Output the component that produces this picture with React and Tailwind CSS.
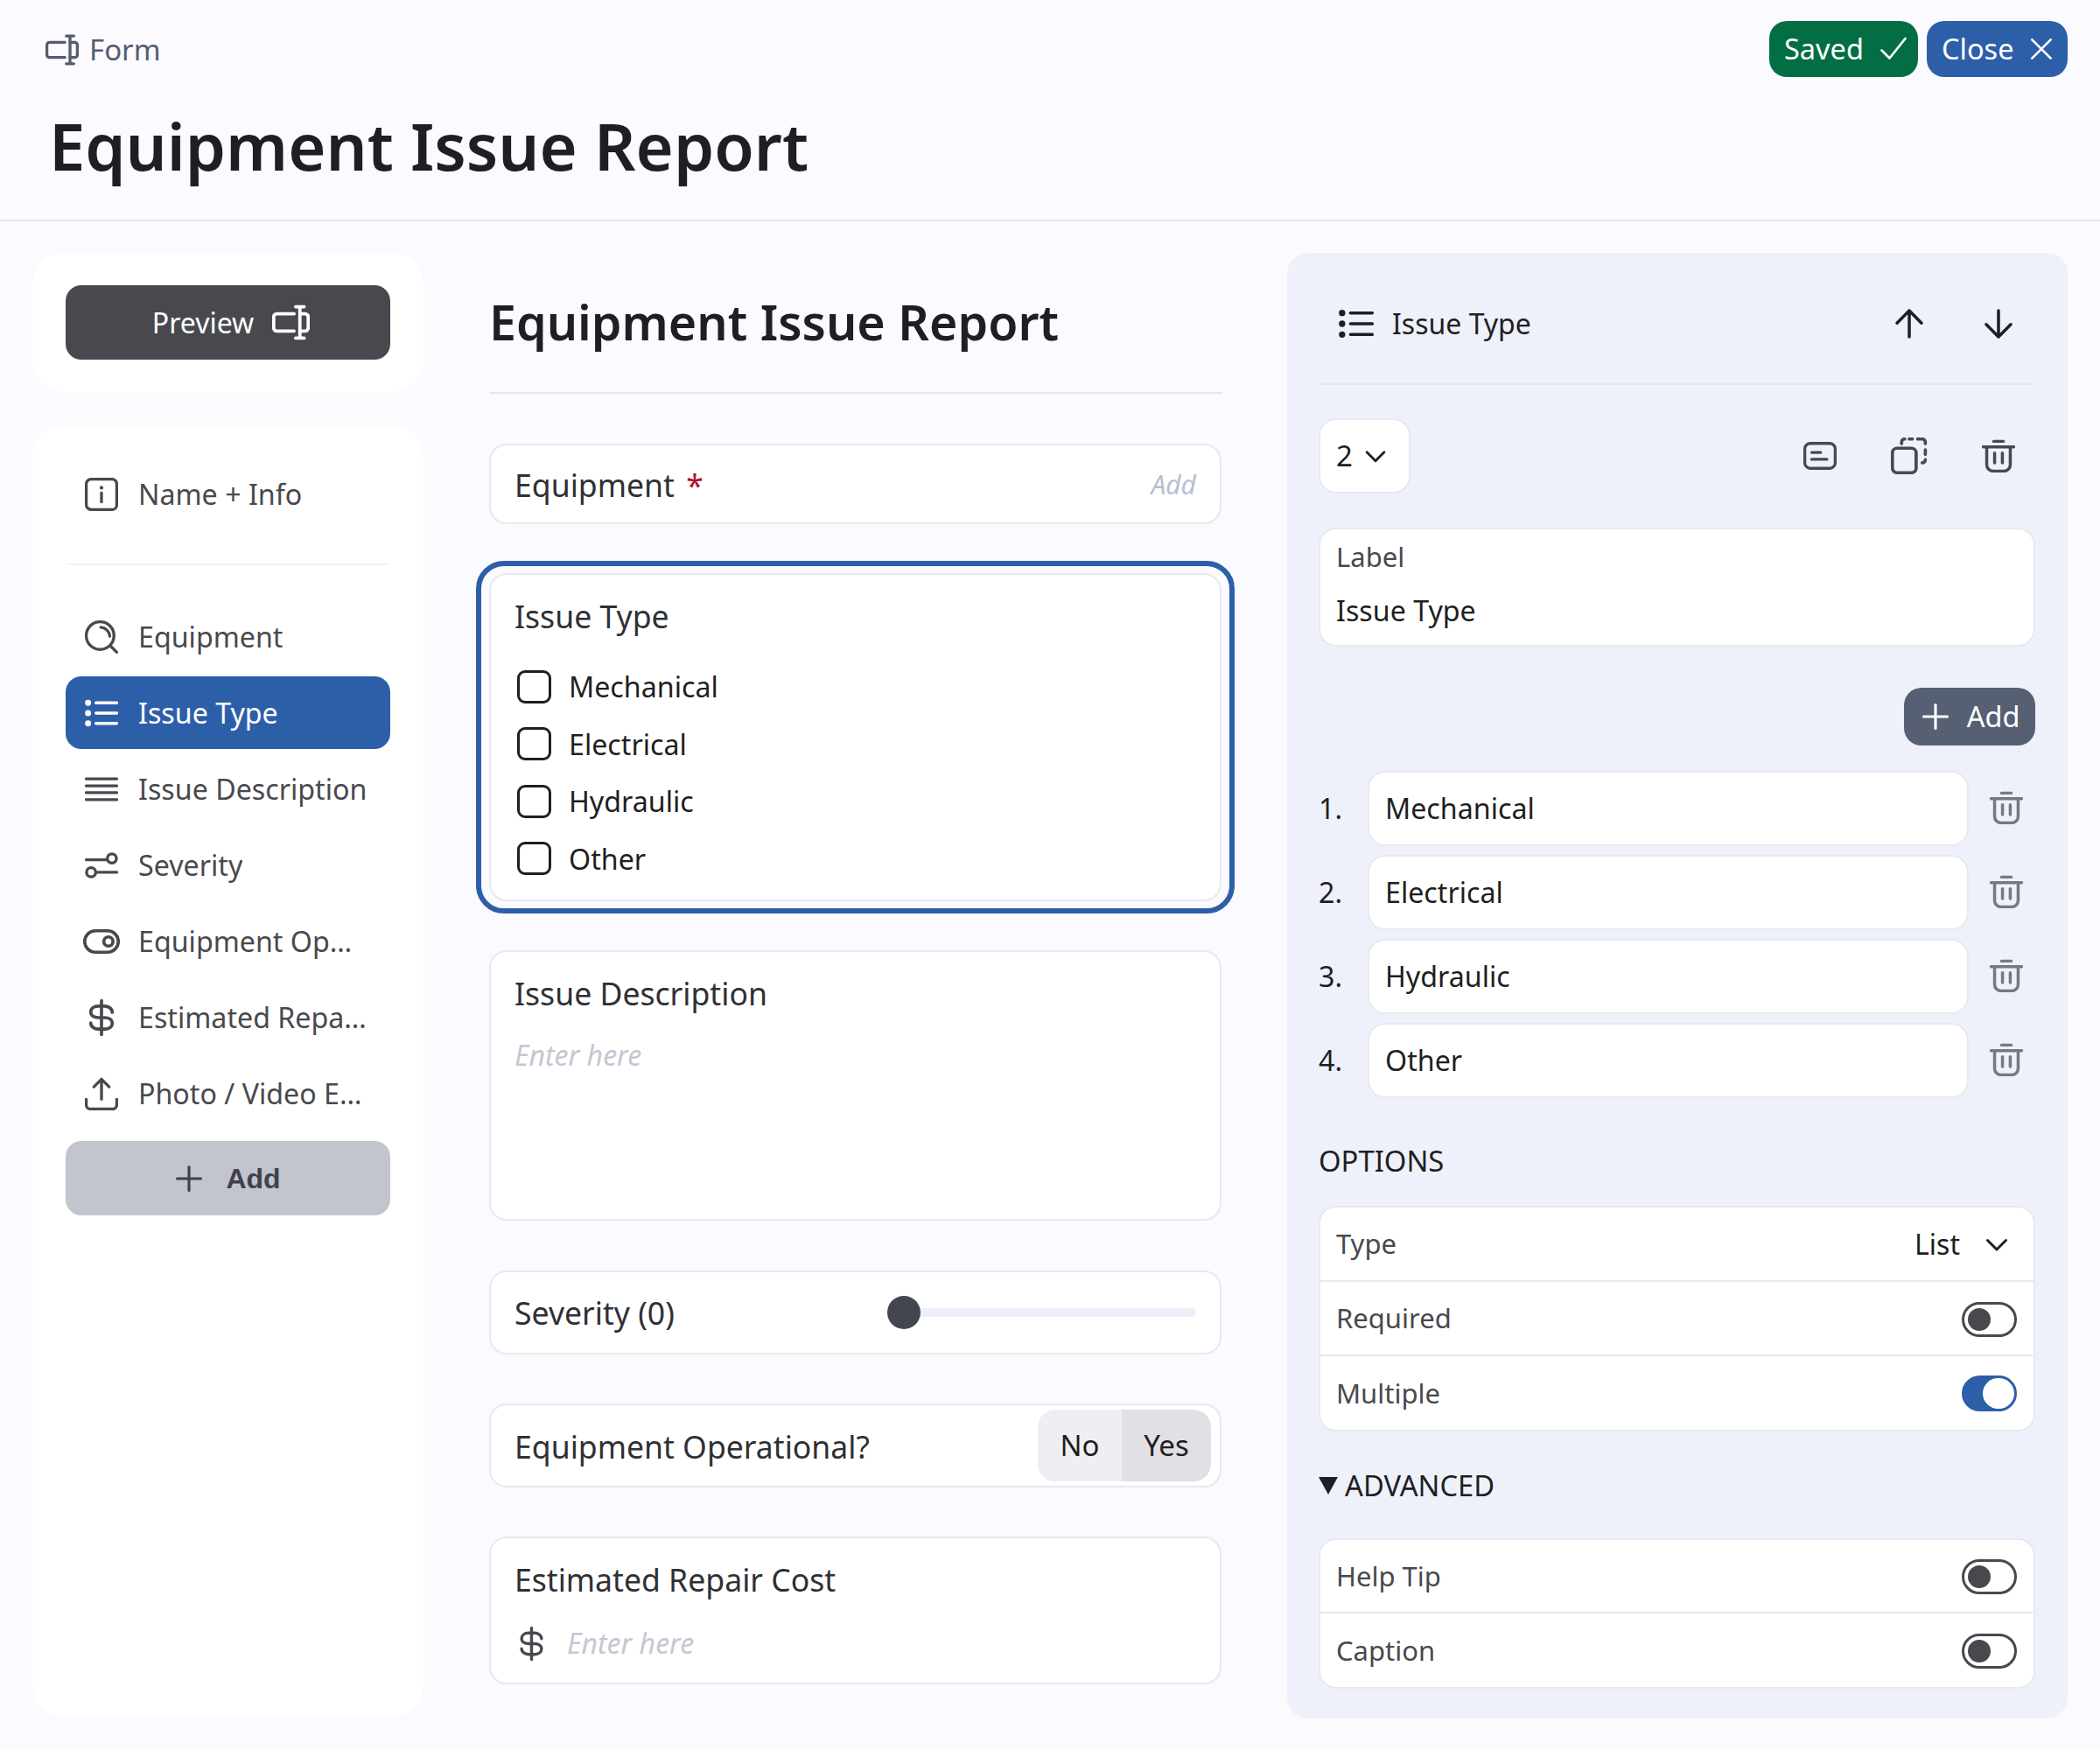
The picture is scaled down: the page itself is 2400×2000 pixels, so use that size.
import React from 'react';

const Icon = ({ size = 38, className = '', sw = 2.100, children }) => (
  <svg width={size} height={size} viewBox="0 0 24 24" fill="none" stroke="currentColor" strokeWidth={sw} strokeLinecap="round" strokeLinejoin="round" className={`shrink-0 ${className}`}>
    {children}
  </svg>
);

const FormIcon = (p) => (
  <Icon {...p}>
    <path d="M14 6.500H3a2 2 0 0 0-2 2v7a2 2 0 0 0 2 2h11" />
    <path d="M17.700 2v20M15 2h5.400M15 22h5.400" />
    <path d="M17.700 6.500H21a2 2 0 0 1 2 2v7a2 2 0 0 1-2 2h-3.300" />
  </Icon>
);
const InfoIcon = (p) => (
  <Icon {...p}>
    <rect x="1" y="1" width="22" height="22" rx="3.500" />
    <path d="M12 11v6.500" />
    <path d="M12 7.200v.01" strokeWidth="2.600" />
  </Icon>
);
const SearchIcon = (p) => (
  <Icon {...p}>
    <circle cx="11" cy="11" r="10" />
    <path d="M11.500 5a7 7 0 0 1 6.500 6.500" />
    <path d="M18.500 18.500L23 23" />
  </Icon>
);
const ListIcon = (p) => (
  <Icon {...p}>
    <path d="M8 4.600h15M8 12h15M8 19.400h15" />
    <path d="M2.300 4.600v.01M2.300 12v.01M2.300 19.400v.01" strokeWidth="4.400" />
  </Icon>
);
const LinesIcon = (p) => (
  <Icon {...p}>
    <path d="M1 4.500h22M1 9.500h22M1 14.500h22M1 19.500h22" />
  </Icon>
);
const SlidersIcon = (p) => (
  <Icon {...p}>
    <path d="M1 8h14" />
    <circle cx="19.500" cy="7" r="3.300" />
    <circle cx="4.500" cy="17" r="3.300" />
    <path d="M9 17h14" />
  </Icon>
);
const ToggleIcon = (p) => (
  <Icon {...p}>
    <rect x="1" y="5" width="22" height="14" rx="7" />
    <circle cx="16.500" cy="12" r="3" />
  </Icon>
);
const DollarIcon = (p) => (
  <Icon {...p}>
    <path d="M12 1v22" />
    <path d="M19 8.500C19 6 16.500 4.500 14 4.500h-4C7 4.500 5 6 5 8.300 5 10.700 7 12 10 12h4c3 0 5 1.300 5 3.700 0 2.300-2 3.800-5 3.800h-4C7.500 19.500 5 18 5 15.500" />
  </Icon>
);
const UploadIcon = (p) => (
  <Icon {...p}>
    <path d="M12 16V1.500M6.500 7L12 1.500 17.500 7" />
    <path d="M1 16v4a3 3 0 0 0 3 3h16a3 3 0 0 0 3-3v-4" />
  </Icon>
);
const PlusIcon = (p) => (
  <Icon {...p}>
    <path d="M12 3v18M3 12h18" />
  </Icon>
);
const TrashIcon = (p) => (
  <Icon sw={2.200} {...p}>
    <path d="M1 5.500h22" />
    <path d="M8.500 1.500h7" />
    <path d="M3.500 5.500v13a4.500 4.500 0 0 0 4.500 4.500h8a4.500 4.500 0 0 0 4.500-4.500v-13" />
    <path d="M9.200 10v7M14.800 10v7" />
  </Icon>
);
const CardIcon = (p) => (
  <Icon {...p}>
    <rect x="1" y="3" width="22" height="18" rx="4" />
    <path d="M6 9.500h6.500M6 14.500h11" />
  </Icon>
);
const CopyIcon = (p) => (
  <Icon {...p}>
    <rect x="1" y="7" width="15.500" height="16" rx="3" />
    <path d="M7 4V3a2 2 0 0 1 2-2M12 1h2M17.500 1H20.500a2 2 0 0 1 2 2v1M22.500 8v3M22.500 14.500a2 2 0 0 1-2 2" />
  </Icon>
);
const ChevronIcon = (p) => (
  <Icon {...p}>
    <path d="M5 9l7 7 7-7" />
  </Icon>
);
const ArrowUp = (p) => (
  <Icon {...p}>
    <path d="M12 21V3M3.600 11.500L12 3l8.400 8.500" />
  </Icon>
);
const ArrowDown = (p) => (
  <Icon {...p}>
    <path d="M12 3v18M3.600 12.500L12 21l8.400-8.500" />
  </Icon>
);
const CheckIcon = (p) => (
  <Icon {...p}>
    <path d="M3 13l6 6L21 4" />
  </Icon>
);
const CloseIcon = (p) => (
  <Icon {...p}>
    <path d="M4 4l16 16M20 4L4 20" />
  </Icon>
);

const navItems = [
  { label: 'Equipment', icon: SearchIcon },
  { label: 'Issue Type', icon: ListIcon, active: true },
  { label: 'Issue Description', icon: LinesIcon },
  { label: 'Severity', icon: SlidersIcon },
  { label: 'Equipment Op…', icon: ToggleIcon, size: 42 },
  { label: 'Estimated Repa…', icon: DollarIcon, size: 42 },
  { label: 'Photo / Video E…', icon: UploadIcon },
];

const choices = ['Mechanical', 'Electrical', 'Hydraulic', 'Other'];

const Card = ({ className = '', children }) => (
  <div className={`bg-white border-2 border-[#e8e9f0] rounded-[20px] ${className}`}>{children}</div>
);

const Toggle = ({ on }) =>
  on ? (
    <div className="w-[63px] h-[41px] rounded-full bg-[#2d5fa8] border-[3px] border-[#2d5fa8] flex justify-end">
      <div className="w-[36px] h-[35px] rounded-full bg-white" />
    </div>
  ) : (
    <div className="mt-[2px] w-[63px] h-[40px] rounded-full border-[3px] border-[#48494e] flex items-center pl-[4px]">
      <div className="w-[26px] h-[26px] rounded-full bg-[#48494e]" />
    </div>
  );

const OptionRow = ({ label, className = '', children }) => (
  <div className={`flex items-center justify-between pl-[18px] text-[#48494e] text-[31px] ${className}`}>
    <span>{label}</span>
    {children}
  </div>
);

export default function App() {
  return (
    <div className="w-[2400px] h-[2000px] bg-[#fafaff] font-['Noto_Sans',sans-serif] text-[#1e1f22]">
      <header className="h-[253px] border-b-2 border-[#e4e7ee] flex justify-between items-start">
        <div className="pl-[52px] pt-[32px]">
          <div className="flex items-center gap-[12px] text-[#545c70] text-[33px] leading-[50px]">
            <FormIcon size={38} />
            <span>Form</span>
          </div>
          <h1 className="ml-[4px] mt-[35px] text-[74px] leading-[100px] font-semibold text-[#1e1f22]">Equipment Issue Report</h1>
        </div>
        <div className="flex gap-[10px] pt-[24px] pr-[37px]">
          <button className="h-[64px] w-[170px] rounded-[20px] bg-[#036e43] text-white text-[32.500px] flex items-center justify-between pl-[17px] pr-[10px]">
            Saved <CheckIcon size={36} sw={1.800} />
          </button>
          <button className="h-[64px] w-[161px] rounded-[20px] bg-[#2d5fa8] text-white text-[32.500px] flex items-center justify-between pl-[17px] pr-[14px]">
            Close <CloseIcon size={32} sw={2} />
          </button>
        </div>
      </header>

      <main className="flex pt-[36px] pl-[37px]">
        <aside className="w-[447px] flex flex-col gap-[38px]">
          <div className="h-[159px] bg-white rounded-[36px] flex items-center px-[38px]">
            <button className="w-full h-[85px] pl-[7px] rounded-[18px] bg-[#48494e] text-white text-[32px] flex items-center justify-center gap-[21px]">
              Preview <FormIcon size={43} />
            </button>
          </div>
          <div className="h-[1477px] bg-white rounded-[36px] px-[38px] pt-[37px]">
            <div className="h-[84px] flex items-center gap-[23px] pl-[22px] text-[#48494e] text-[32.200px]">
              <InfoIcon />
              <span>Name + Info</span>
            </div>
            <div className="mt-[37px] mb-[40px] h-[2px] bg-[#f1f2f6]" />
            <nav className="flex flex-col gap-[4px]">
              {navItems.map(({ label, icon: NavIcon, active, size }) => (
                <div
                  key={label}
                  className={`h-[83px] rounded-[18px] flex items-center gap-[23px] pl-[22px] text-[32.200px] ${active ? 'bg-[#2d5fa8] text-white' : 'text-[#48494e]'}`}
                >
                  <NavIcon size={size || 38} className={size ? '-mx-[2px]' : ''} />
                  <span className="truncate pt-[2px]">{label}</span>
                </div>
              ))}
            </nav>
            <button className="mt-[13px] w-full h-[85px] rounded-[18px] bg-[#c2c4ce] text-[#3f424a] text-[32px] font-bold flex items-center justify-center gap-[24px] pr-[2px]">
              <PlusIcon size={36} /> <span className="font-['Liberation_Sans',sans-serif]">Add</span>
            </button>
          </div>
        </aside>

        <section className="w-[837px] ml-[75px]">
          <div className="h-[161px] border-b-2 border-[#e4e7ee] flex items-center">
            <h2 className="-mt-[2px] text-[55.500px] leading-[76px] font-semibold text-[#1e1f22]">Equipment Issue Report</h2>
          </div>
          <Card className="mt-[57px] h-[92px] flex items-center justify-between pl-[27px] pr-[27px]">
            <div className="pt-[3px] text-[35.600px] text-[#2f3034]">
              Equipment <span className="ml-[4px] text-[#b01030]">*</span>
            </div>
            <span className="italic text-[30px] text-[#b9bed3]">Add</span>
          </Card>

          <div className="mt-[42px] -mx-[15px] border-[6px] border-[#2d5fa8] rounded-[32px] px-[9px] pt-[8px] pb-[8px]">
            <Card className="h-[375px] pl-[27px] pt-[22px]">
              <div className="text-[35.600px] leading-[50px] text-[#2f3034]">Issue Type</div>
              <div className="mt-[37px] flex flex-col gap-[27.400px]">
                {choices.map((c) => (
                  <label key={c} className="flex items-center gap-[20px] text-[32.200px] h-[38px] text-[#1e1f22]">
                    <span className="ml-[3px] w-[39px] h-[38px] rounded-[9px] border-[3.500px] border-[#1e1f22]" />
                    <span className="pt-[1px]">{c}</span>
                  </label>
                ))}
              </div>
            </Card>
          </div>

          <Card className="mt-[42px] h-[309px] pl-[27px] pt-[22px]">
            <div className="text-[35.600px] leading-[50px] text-[#2f3034]">Issue Description</div>
            <div className="mt-[22px] italic text-[32px] text-[#c5c7d2]">Enter here</div>
          </Card>

          <Card className="mt-[57px] h-[96px] flex items-center justify-between pl-[27px] pr-[27px]">
            <span className="pt-[1px] text-[35.600px] text-[#2f3034]">Severity (0)</span>
            <div className="w-[353px] h-[10px] rounded-full bg-[#eceff7] flex items-center">
              <div className="w-[38px] h-[38px] rounded-full bg-[#42464e]" />
            </div>
          </Card>

          <Card className="mt-[56px] h-[96px] flex items-center justify-between pl-[27px] pr-[10px]">
            <span className="pt-[3px] text-[35.600px] text-[#2f3034]">Equipment Operational?</span>
            <div className="w-[198px] h-[82px] rounded-[20px] overflow-hidden flex text-[33px] text-[#1e1f22]">
              <div className="w-[96px] bg-[#efeff3] flex items-center justify-center">No</div>
              <div className="flex-1 bg-[#e0e0e5] flex items-center justify-center">Yes</div>
            </div>
          </Card>

          <Card className="mt-[56px] h-[169px] pl-[27px] pt-[22px]">
            <div className="text-[35.600px] leading-[50px] text-[#2f3034]">Estimated Repair Cost</div>
            <div className="mt-[24px] flex items-center gap-[21px]">
              <DollarIcon size={39} className="text-[#48494e]" />
              <span className="italic text-[32px] text-[#c5c7d2]">Enter here</span>
            </div>
          </Card>
        </section>

        <section className="w-[892px] ml-[75px] h-[1675px] bg-[#eef1fa] rounded-[24px] pl-[36px] pr-[37px]">
          <div className="h-[151px] pt-[12px] border-b-2 border-[#e4e7ee] flex items-center pl-[23px] pr-[22px]">
            <ListIcon size={40} />
            <span className="ml-[21px] text-[32px] flex-1">Issue Type</span>
            <ArrowUp size={40} />
            <ArrowDown size={40} className="ml-[62px]" />
          </div>

          <div className="mt-[38px] flex items-center justify-between pr-[23px]">
            <div className="w-[105px] h-[86px] bg-white border-2 border-[#e8e9f0] rounded-[20px] flex items-center pl-[18px] gap-[9px] text-[33px]">
              2 <ChevronIcon size={34} sw={2} />
            </div>
            <div className="flex items-center gap-[62px] text-[#48494e]">
              <CardIcon size={38} />
              <CopyIcon size={42} />
              <TrashIcon size={38} />
            </div>
          </div>

          <Card className="mt-[39px] h-[136px] pl-[18px] pt-[8px]">
            <div className="text-[31px] leading-[46px] text-[#48494e]">Label</div>
            <div className="mt-[16px] text-[32.200px] leading-[46px]">Issue Type</div>
          </Card>

          <div className="mt-[47px] flex justify-end">
            <button className="h-[66px] w-[150px] rounded-[20px] bg-[#575f73] text-white text-[32.500px] flex items-center justify-center gap-[18px]">
              <PlusIcon size={36} /> Add
            </button>
          </div>

          <div className="mt-[29px] flex flex-col gap-[10px]">
            {choices.map((c, i) => (
              <div key={c} className="flex items-center text-[32.200px]">
                <span className="w-[56px] shrink-0">{i + 1}.</span>
                <Card className="w-[687px] h-[86px] flex items-center pl-[18px]">{c}</Card>
                <TrashIcon size={38} className="ml-[24px] -mt-[2px] text-[#747983]" />
              </div>
            ))}
          </div>

          <div className="h-[123px] pt-[21px] flex items-center text-[32.800px]">OPTIONS</div>

          <Card className="overflow-hidden">
            <OptionRow label="Type" className="h-[85px] border-b-2 border-[#e8e9f0] pr-[24px]">
              <span className="flex items-center gap-[24px] text-[32px] text-[#1e1f22]">
                List <ChevronIcon size={36} sw={2} />
              </span>
            </OptionRow>
            <OptionRow label="Required" className="h-[85px] border-b-2 border-[#e8e9f0] pr-[19px]">
              <Toggle />
            </OptionRow>
            <OptionRow label="Multiple" className="h-[84px] pr-[19px]">
              <Toggle on />
            </OptionRow>
          </Card>

          <div className="h-[122px] pt-[2px] flex items-center gap-[8px] text-[32.700px]">
            <svg width="22" height="20" viewBox="0 0 22 20" className="shrink-0">
              <path d="M0 0h22L11 20z" fill="#1e1f22" />
            </svg>
            ADVANCED
          </div>

          <Card className="overflow-hidden">
            <OptionRow label="Help Tip" className="h-[84px] border-b-2 border-[#e8e9f0] pr-[19px]">
              <Toggle />
            </OptionRow>
            <OptionRow label="Caption" className="h-[84px] pr-[19px]">
              <Toggle />
            </OptionRow>
          </Card>
        </section>
      </main>
    </div>
  );
}
